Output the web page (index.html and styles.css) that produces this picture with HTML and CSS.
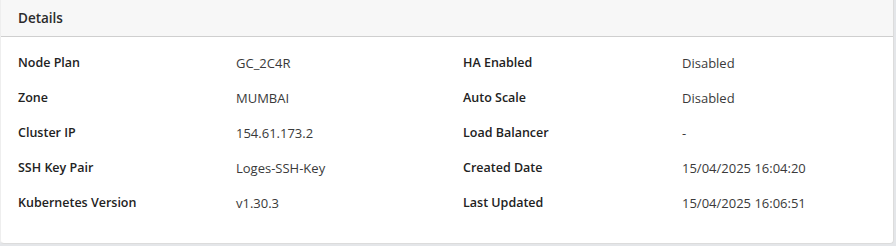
FILE: index.html
```html
<!DOCTYPE html>
<html lang="en">
<head>
    <meta charset="UTF-8">
    <meta name="viewport" content="width=device-width, initial-scale=1.0">
    <title>Details</title>
    <link rel="stylesheet" href="styles.css">
</head>
<body>
    <div class="card">
        <div class="card-header">Details</div>
        <div class="details">
            <div class="label">Node Plan</div>
            <div class="value">GC_2C4R</div>
            <div class="label">HA Enabled</div>
            <div class="value">Disabled</div>

            <div class="label">Zone</div>
            <div class="value">MUMBAI</div>
            <div class="label">Auto Scale</div>
            <div class="value">Disabled</div>

            <div class="label">Cluster IP</div>
            <div class="value">154.61.173.2</div>
            <div class="label">Load Balancer</div>
            <div class="value">-</div>

            <div class="label">SSH Key Pair</div>
            <div class="value">Loges-SSH-Key</div>
            <div class="label">Created Date</div>
            <div class="value">15/04/2025 16:04:20</div>

            <div class="label">Kubernetes Version</div>
            <div class="value">v1.30.3</div>
            <div class="label">Last Updated</div>
            <div class="value">15/04/2025 16:06:51</div>
        </div>
    </div>
</body>
</html>
```

FILE: styles.css
```css
body {
    font-family: "Open Sans", "Noto Sans", Arial, sans-serif;
    background-color: #e4e6e9;
    margin: 0;
    padding: 0 2px 2px 0;
}
.card {
    background: #fff;
    border: 1px solid #dcdcdc;
    border-top: none;
    border-left-color: #eee;
    border-radius: 0 0 4px 4px;
    height: 244px;
    box-sizing: border-box;
}
.card-header {
    background-color: #f7f7f7;
    border-bottom: 1px solid #cfcfcf;
    height: 37px;
    box-sizing: border-box;
    padding: 0 17px;
    display: flex;
    align-items: center;
    font-size: 13.5px;
    font-weight: 600;
    color: #2b2b2b;
}
.details {
    display: grid;
    grid-template-columns: 218px 227px 219px 1fr;
    grid-auto-rows: 35px;
    padding: 8px 17px 0;
    align-items: center;
    font-size: 12.5px;
}
.label {
    font-weight: 600;
    color: #222;
}
.value {
    font-size: 13px;
    color: #3a3a3a;
}
```
